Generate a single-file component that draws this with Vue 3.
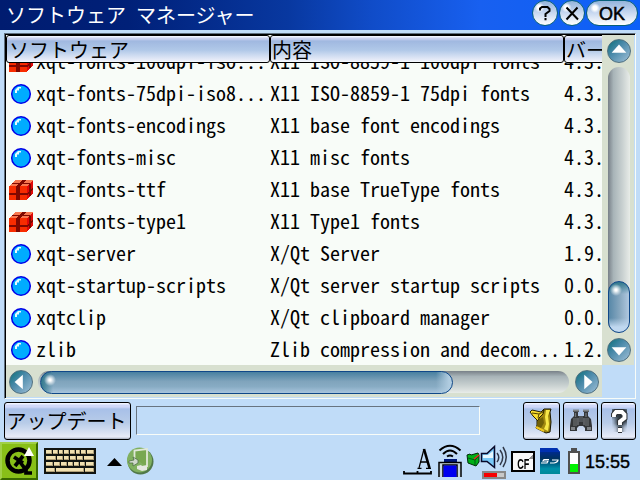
<script setup>
const rows = [
  ['box', 'xqt-fonts-100dpi-iso...', 'X11 ISO-8859-1 100dpi fonts', '4.3.'],
  ['ball', 'xqt-fonts-75dpi-iso8...', 'X11 ISO-8859-1 75dpi fonts', '4.3.'],
  ['ball', 'xqt-fonts-encodings', 'X11 base font encodings', '4.3.'],
  ['ball', 'xqt-fonts-misc', 'X11 misc fonts', '4.3.'],
  ['box', 'xqt-fonts-ttf', 'X11 base TrueType fonts', '4.3.'],
  ['box', 'xqt-fonts-type1', 'X11 Type1 fonts', '4.3.'],
  ['ball', 'xqt-server', 'X/Qt Server', '1.9.'],
  ['ball', 'xqt-startup-scripts', 'X/Qt server startup scripts', '0.0.'],
  ['ball', 'xqtclip', 'X/Qt clipboard manager', '0.0.'],
  ['ball', 'zlib', 'Zlib compression and decom...', '1.2.'],
].map(([icon, name, desc, version]) => ({ icon, name, desc, version }))

const keys = [
  [[2, 6], [9, 5], [15, 4], [20, 5], [26, 5], [32, 4], [37, 5], [43, 7]],
  [[2, 10], [13, 6], [20, 5], [26, 6], [33, 6], [40, 10]],
  [[2, 7], [10, 6], [17, 6], [24, 5], [30, 5], [36, 5], [42, 8]],
  [[2, 9], [12, 28], [41, 9]],
]
</script>

<template>
  <div class="screen">
    <header class="title">
      <h1>ソフトウェア マネージャー</h1>
      <button class="pill"><svg width="26" height="26" viewBox="0 0 26 26"><path d="M8 10.500V8.500L10 7h5.500l2 2v2L13.500 14v3M13.500 18v2.200" /></svg></button>
      <button class="pill"><svg width="26" height="26" viewBox="0 0 26 26"><path d="M7.500 7.500l11.500 12M18.500 7.500L7.500 19.500" /></svg></button>
      <button class="pill ok">OK</button>
    </header>

    <main class="frame">
      <section class="list">
        <div class="columns head">
          <span>ソフトウェア</span><span>内容</span><span>バージョン</span>
        </div>
        <div class="body">
          <div v-for="row in rows" :key="row.name" class="columns row">
            <div class="name">
              <svg v-if="row.icon === 'ball'" class="icon" width="26" height="24" viewBox="0 0 26 24">
                <circle cx="13" cy="11" r="9.300" fill="#00acff" stroke="#0000e8" stroke-width="1.500" />
                <path d="M7 10V7l3-3h3v1.500h-2v2H9V10z" fill="#e8faff" />
              </svg>
              <svg v-else class="icon" width="26" height="24" viewBox="0 0 26 24" shape-rendering="crispEdges">
                <path d="M1 7h18v14H1z" fill="#f82c00" />
                <path d="M1 7l7-6h17l-6 6z" fill="#f87850" />
                <path d="M19 7l6-6v13l-6 7z" fill="#e00808" />
                <path d="M8 7h4v14H8zM1 14h18v2H1zM8 7l7-6h3l-6 6zM4 4h18v1H4zM19 14l6-6v3l-6 5zM21 5h2v12h-2z" fill="#800800" />
              </svg>
              <span>{{ row.name }}</span>
            </div>
            <span>{{ row.desc }}</span>
            <span>{{ row.version }}</span>
          </div>
        </div>
      </section>
      <div class="vbar">
        <svg class="arrow" width="24" height="24" viewBox="0 0 24 24"><path d="M12 5l8 9H4z" /></svg>
        <div class="vtrack"><div class="vthumb"></div></div>
        <svg class="arrow" width="24" height="24" viewBox="0 0 24 24"><path d="M12 18l-8-9h16z" /></svg>
      </div>
      <div class="hbar">
        <svg class="arrow" width="24" height="24" viewBox="0 0 24 24"><path d="M5 12l9-8v16z" /></svg>
        <div class="htrack"><div class="hthumb"></div></div>
        <svg class="arrow" width="24" height="24" viewBox="0 0 24 24"><path d="M18 12l-9 8V4z" /></svg>
      </div>
    </main>

    <div class="tools">
      <button class="btn update">アップデート</button>
      <div class="status"></div>
      <button class="btn b1">
        <svg width="26" height="28" viewBox="0 0 26 28">
          <path d="M15 2h7l-1 3 1 10-1 10-4 1-10-5 1-3V9z" fill="#a08810" stroke="#181400" />
          <path d="M17 3h4l-2 6 1 8-1 7-4-2 2-5-1-7z" fill="#f8e848" />
          <path d="M1 5l2-2 9 2 3-2-1 4-4 4-1 3-5-5z" fill="#f8dc30" stroke="#282000" />
          <path d="M3 6l7 1-1 4M10 7l4-2" fill="none" stroke="#504000" />
          <path d="M9 13l5-3 1 6-3 5-4-1z" fill="#706008" />
          <path d="M7 20l8 4" stroke="#f0c820" stroke-width="2" />
        </svg>
      </button>
      <button class="btn b2">
        <svg width="26" height="28" viewBox="0 0 26 28">
          <path d="M5 3h6v2h-1v4h6V5h-1V3h6v2h-1v4l3 3 1 7v5h-7v-3l-2-2h-4l-2 2v3H2v-5l1-7 3-3V5H5z" fill="#343638" />
          <path d="M5 3.500h6M15 3.500h6" stroke="#808488" stroke-width="2" />
          <path d="M7.500 6v4M18 6v4M10 11v7M16 11v7" stroke="#707478" stroke-width="1.300" />
          <path d="M5 11h4v8H5zM17 11h4v8h-4z" fill="#55585a" />
          <path d="M3 20h4v3H3zM19 20h4v3h-4z" fill="#808488" />
          <path d="M11 9h4v6h-4z" fill="#505458" />
        </svg>
      </button>
      <button class="btn b3">
        <svg width="32" height="34" viewBox="0 0 32 34">
          <defs><filter id="soft"><feGaussianBlur stdDeviation="2" /></filter></defs>
          <g fill="none">
            <path d="M11 13V10l3-3h5l3 3v4l-5 4v3M15 26h4" stroke="#283038" stroke-width="10" filter="url(#soft)" />
            <path d="M11 13V10.500L13 8h6l2.500 2.500V14L17 17.500V21M15 26h4" stroke="#303438" stroke-width="6" />
            <path d="M11 13V10.500L13 8h6l2.500 2.500V14L17 17.500V21M15 26h4" stroke="#fff" stroke-width="3.900" />
          </g>
        </svg>
      </button>
    </div>

    <footer class="taskbar">
      <svg width="38" height="38" viewBox="0 0 38 38">
        <path d="M0 0h38v38H0z" fill="#88c018" />
        <path d="M0 0h38l-2 2H2v34l-2 2z" fill="#a0d048" />
        <path d="M38 0v38H0l2-2h34V2z" fill="#386800" />
        <circle cx="18.500" cy="18.500" r="11" fill="none" stroke="#000" stroke-width="4.500" />
        <path d="M14 15l9 6M23 14l-8 10M20 20l6 8v3h6" stroke="#000" stroke-width="3.700" fill="none" />
        <path d="M29 5l5 9H24z" fill="#fff" />
      </svg>
      <svg class="keyboard" width="52" height="26" viewBox="0 0 52 26" shape-rendering="crispEdges">
        <path d="M0 0h52v26H0z" fill="#101410" />
        <template v-for="(line, i) in keys" :key="i">
          <g v-for="[x, w] in line" :key="x">
            <rect :x="x" :y="2 + i * 6" :width="w" height="4" fill="#b0a078" />
            <rect :x="x" :y="2 + i * 6" :width="w - 1" height="3" fill="#f0e0b0" />
          </g>
        </template>
      </svg>
      <svg class="up" width="15" height="8" viewBox="0 0 15 8"><path d="M7.500 0L15 8H0z" /></svg>
      <svg class="launch" width="28" height="28" viewBox="0 0 28 28">
        <circle cx="14.500" cy="14.500" r="13" fill="#507848" />
        <circle cx="13.500" cy="13" r="12.500" fill="#80b060" />
        <path d="M8.500 11V3.500L21 2v18" fill="#78a850" stroke="#e0e8d8" stroke-width="1.800" />
        <path d="M3 14l5-1-1-3 5 3v3l-5 3v-3H3z" fill="#d0d8cc" stroke="#486840" stroke-width=".7" />
        <path d="M11 19l4-1 1 1 5-1v5l-5 1-5-2z" fill="#e4e8e0" />
      </svg>
      <div class="spacer"></div>
      <svg width="29" height="38" viewBox="0 0 29 38" fill="none" stroke="#000">
        <path d="M1 29v2.500h27V29M14.500 29v2" stroke-width="1.800" />
        <path d="M16 26l5-19" stroke-width="1.200" /><path d="M21 7l5.500 19" stroke-width="2.600" /><path d="M17.500 20h7M14.500 26.300h4M23 26.300h5" stroke-width="1.300" />
      </svg>
      <svg class="net" width="24" height="38" viewBox="0 0 24 38">
        <path d="M1.500 8.500Q12-1 22.500 8.500M5 12q7-7 14 0M9 14.500q3-2 6 0" fill="none" stroke="#000" stroke-width="2" />
        <path d="M6 17h13v3H6z" fill="#001878" />
        <path d="M1 20.500h22V35H1z" fill="#c8d8e0" />
        <path d="M1 35V20.500h22V35M5 35V23h14v12" fill="#0000f0" fill-opacity="0" stroke="#000" stroke-width="1.500" />
        <path d="M5.500 23.500h13V35h-13z" fill="#0000f0" />
      </svg>
      <svg class="sound" width="42" height="38" viewBox="0 0 42 38">
        <path d="M1 13l3-1 1 1 7-2 1 2v7l-3 4-8-3z" fill="#00b018" stroke="#002c08" />
        <path d="M2 16l7 2v5M9 18l4-4" fill="none" stroke="#005810" /><path d="M8 17l5-4" stroke="#f02020" stroke-width="1.500" />
        <path d="M15.500 11.500H21l7.500-7v21l-7.500-6h-5.500z" fill="#78c8f8" stroke="#080828" stroke-width="1.500" />
        <path d="M17 13h5l5-4v7H17z" fill="#e8f8ff" />
        <path d="M31 11q3.500 4.500 0 9M34 8q5.500 7 0 15M37 5q6.500 10 0 20" fill="none" stroke="#303848" stroke-width="1.500" />
        <path d="M16 29h24v8H16z" fill="#888" /><path d="M18 31h20v4H18z" fill="#c8c8c8" /><path d="M18 31h13v4H18z" fill="#f80000" />
      </svg>
      <div class="cf"><span>CF</span></div>
      <svg class="sd" width="20" height="26" viewBox="0 0 20 26">
        <defs><linearGradient id="sdg" x2="0" y2="1"><stop stop-color="#0028a8" /><stop offset=".4" stop-color="#003060" /><stop offset=".8" stop-color="#0090a8" /><stop offset="1" stop-color="#008898" /></linearGradient></defs>
        <path d="M0 0h17l3 4v22H0z" fill="url(#sdg)" />
        <path d="M0 0h17l3 4H0z" fill="#0030b0" />
        <path d="M9 11.500H4l-1 1.500h5l-1 2H1M10 15h4q4-1 4-3h-6" fill="none" stroke="#fff" stroke-width="1.200" />
      </svg>
      <svg class="battery" width="12" height="26" viewBox="0 0 12 26" shape-rendering="crispEdges">
        <path d="M3 0h6v3h3v23H0V3h3z" fill="#505050" /><path d="M2 5h8v19H2z" fill="#fff" /><path d="M2 16h8v8H2z" fill="#00f000" />
      </svg>
      <time>15:55</time>
    </footer>
  </div>
</template>

<style>
body { margin: 0; }
</style>

<style scoped>
* { box-sizing: border-box; }
.screen {
  width: 640px; height: 480px; overflow: hidden; display: flex; flex-direction: column;
  background: #c0dcf8; color: #000;
  font: 20px/28px "Noto Sans CJK JP", sans-serif; font-feature-settings: "hwid";
}
button { margin: 0; padding: 0; border: 0; font: inherit; color: inherit; font-feature-settings: inherit; }
svg { display: block; flex: none; }
.title {
  height: 30px; flex: none; display: flex; gap: 1px; padding: 0 2px 0 6px;
  background: linear-gradient(90deg, #001c70, #002078 20%, #0838a0 45%, #104cc8 58%, #1860f0 75%, #0c60f8);
}
h1 { flex: 1; margin: 0; font: inherit; line-height: 29px; color: #fff; white-space: nowrap; }
.pill {
  width: 26px; height: 26px; border-radius: 13px; border: 1.500px solid #086078;
  background: radial-gradient(circle at 27% 27%, #fff 0 2px, transparent 5px), linear-gradient(#94b4dc, #c8d8f0 50%, #fff);
  display: flex; align-items: center; justify-content: center;
}
.pill path { fill: none; stroke: #000; stroke-width: 2; }
.ok {
  width: 52px; font: 18px/24px "Liberation Sans", sans-serif; -webkit-text-stroke: .5px #000; padding-top: 1px;
  background: radial-gradient(circle at 8px 7px, #fff 0 2px, transparent 5px), linear-gradient(#94b4dc, #c8d8f0 50%, #fff);
}
.frame {
  width: 632px; height: 366px; flex: none; margin: 3px 0 0 4px;
  border: 1px solid #607080; border-right-color: #f8fcf8; border-bottom-color: #f8fcf8;
  box-shadow: inset 1px 1px #000; padding: 1px;
  display: grid; grid-template: 330px 32px / 596px 32px;
}
.list { background: #f8fcf8; overflow: hidden; display: flex; flex-direction: column; }
.columns { display: grid; grid-template-columns: 264px 294px 200px; white-space: pre; }
.head { height: 28px; flex: none; }
.head span {
  border: 1px solid #000; border-radius: 3px; padding-left: 2px; line-height: 27px; height: 28px;
  background: linear-gradient(#f0f4ff 0 1px, #c8d0f0 2px 3px, #a0b8e0 5px, #b0c8e8 14px, #e8ecf8 24px, #f8fcff);
}
.head span + span { padding-left: 1px; }
.body { height: 302px; display: flex; flex-direction: column; justify-content: flex-end; overflow: hidden; }
.row { height: 32px; flex: none; }
.body .row:last-child { height: 30px; }
.name { display: flex; }
.icon { margin: 4px 2px 0 2px; }
.vbar { background: #d8e0d0; display: flex; flex-direction: column; align-items: center; padding: 4px 0 3px 2px; }
.vtrack {
  width: 22px; flex: 1; margin: 4px 0 5px; border-radius: 11px; display: flex; align-items: flex-end;
  background: linear-gradient(90deg, #788088, #a8b4b8 25%, #c8d0d0 65%, #e8ece8);
}
.vthumb {
  width: 23px; height: 52px; border-radius: 12px; border: 1.500px solid #104888;
  background: radial-gradient(circle at 7px 8px, #fff 0 1px, transparent 6px), linear-gradient(#30788c, transparent 12px, transparent 36px, #c0d8f0 45px), linear-gradient(90deg, #5888a8, #88a8c0 55%, #b0c8e0);
}
.hbar { background: #d8e0d0; display: flex; align-items: center; padding: 2px 3px 0 3px; }
.htrack {
  flex: 1; height: 22px; margin: 0 6px 0 5px; border-radius: 11px; padding-left: 2px;
  background: linear-gradient(#788088, #a8b4b8 25%, #c8d0d0 65%, #e8ece8);
}
.hthumb {
  width: 413px; height: 23px; border-radius: 12px; border: 1.500px solid #104888;
  background: radial-gradient(circle at 9px 8px, #fff 0 1px, transparent 6px), linear-gradient(90deg, #30788c, transparent 12px, transparent 395px, #b0cce0 408px), linear-gradient(#4880a0, #80a4bc 45%, #88acc4 70%, #a8c4dc);
}
.arrow { border-radius: 50%; border: 1px solid #507080; background: linear-gradient(135deg, #087078, #4888a8 40%, #a0c0d8); }
.arrow path { fill: #fff; }
.tools { height: 43px; flex: none; display: flex; align-items: flex-start; padding: 3px 4px 0; }
.btn {
  height: 38px; border: 1px solid #000; border-radius: 3px; display: flex; align-items: center; justify-content: center;
  background: linear-gradient(#f0f4ff 0 1px, #d0d8f8 2px 4px, #a8c0e8 6px, #b8cce8 20px, #e8ecf8 34px, #a0a8b8);
}
.update { width: 127px; padding-right: 2px; }
.status { width: 344px; height: 29px; margin: 4px 43px 0 5px; border: 1px solid #687480; border-right-color: #f8fcf8; border-bottom-color: #f8fcf8; }
.b1 { width: 37px; margin-right: 3px; }
.b2 { width: 35px; margin-right: 3px; }
.b3 { width: 35px; }
.taskbar { flex: 1; display: flex; align-items: flex-start; }
.keyboard { margin: 6px 0 0 6px; }
.up { margin: 16px 0 0 11px; }
.launch { margin: 5px 0 0 4px; }
.spacer { flex: 1; }
.net { margin-left: 6px; }
.sound { margin-left: 4px; }
.cf {
  width: 24px; height: 21px; margin: 9px 0 0 3px; border: 2px solid #000;
  background: linear-gradient(135deg, transparent 50%, #909090 50%) 16px 1px / 4px 5px no-repeat, #f8f8f8;
  font: 700 14px/14px "Liberation Sans", sans-serif; padding-top: 4px; display: flex; justify-content: center;
}
.cf span { transform: scaleX(.65); }
.sd { margin: 6px 0 0 5px; }
.battery { margin: 6px 0 0 8px; }
time { width: 60px; margin-top: 10px; padding-left: 5px; font: 18px/20px "Liberation Sans", sans-serif; -webkit-text-stroke: .4px #000; }
</style>
